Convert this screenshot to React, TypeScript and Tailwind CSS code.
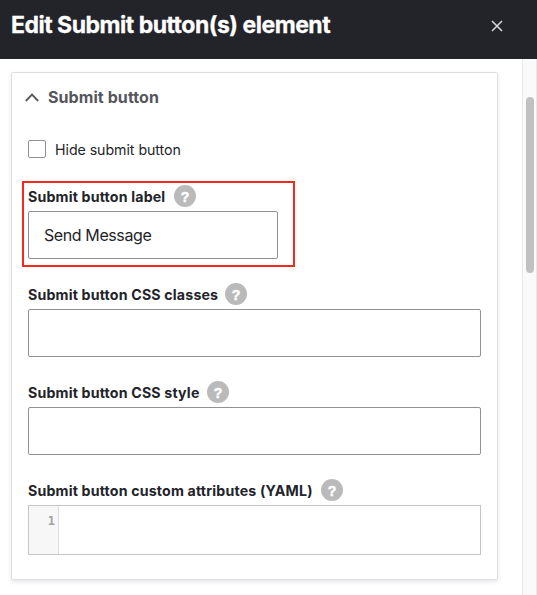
import React from "react";

function Help() {
  return (
    <span className="flex size-[22px] shrink-0 items-center justify-center rounded-full bg-[#bababa] pt-px font-['Liberation_Sans',sans-serif] text-[14px] leading-none font-bold text-white [-webkit-text-stroke:0.5px_white]">
      ?
    </span>
  );
}

function FieldLabel({ text, width }: { text: string; width: string }) {
  return (
    <div className="mb-1 flex h-[22px] items-center gap-2">
      <label className={`${width} text-[14.2px] leading-[22px] font-bold tracking-[0.17px] whitespace-nowrap`}>
        <span className="relative top-px">{text}</span>
      </label>
      <Help />
    </div>
  );
}

const inputStyle =
  "block h-12 rounded-[2px] border border-[#919297] bg-white px-[15px] text-[16px] tracking-[-0.4px] text-[#232429] outline-none";

export default function App() {
  return (
    <div className="flex h-[595px] w-[537px] flex-col overflow-hidden bg-white font-['Inter',sans-serif] text-[#232429]">
      <header className="flex h-[59px] shrink-0 items-start justify-between bg-[#232429] pr-[34px] pl-[11px] text-white">
        <h1 className="mt-[9px] text-[23px] leading-8 font-bold tracking-[-0.49px] whitespace-nowrap [-webkit-text-stroke:0.3px_white]">
          Edit Submit button(s) element
        </h1>
        <button className="mt-5" aria-label="Close">
          <svg width="12" height="12" viewBox="0 0 12 12" fill="none" stroke="#d8d9dc" strokeWidth="1.5">
            <path d="M1 1l10 10M11 1L1 11" />
          </svg>
        </button>
      </header>

      <div className="flex min-h-0 flex-1">
        <main className="min-w-0 flex-1 pt-[13px] pr-6 pl-[11px]">
          <section className="h-[508px] rounded-[2px] border border-[#dedfe4] px-4 shadow-[0_2px_4px_rgba(0,0,0,0.1)]">
            <div className="-ml-[3px] flex h-12 items-center text-[#55565b]">
              <svg width="14" height="9" viewBox="0 0 14 9" fill="none" stroke="currentColor" strokeWidth="1.8">
                <path d="M0.8 8L7 1.6L13.2 8" />
              </svg>
              <h2 className="ml-[9px] text-[16px] font-bold tracking-[0.08px]">Submit button</h2>
            </div>

            <div className="mt-[19px] flex h-[18px] items-center gap-[9px]">
              <span className="size-[18px] rounded-[2px] border border-[#919297]" />
              <span className="relative top-px text-[14.2px] tracking-[-0.05px]">Hide submit button</span>
            </div>

            <div className="relative mt-[27px]">
              <FieldLabel text="Submit button label" width="w-[138px]" />
              <input className={`${inputStyle} w-[250px]`} defaultValue="Send Message" />
              <div className="pointer-events-none absolute -top-1 -left-1.5 h-[86px] w-[273px] border-2 border-[#f5281e]" />
            </div>

            <div className="mt-6">
              <FieldLabel text="Submit button CSS classes" width="w-[189px]" />
              <input className={`${inputStyle} w-full`} />
            </div>

            <div className="mt-6">
              <FieldLabel text="Submit button CSS style" width="w-[171px]" />
              <input className={`${inputStyle} w-full`} />
            </div>

            <div className="mt-6">
              <FieldLabel text="Submit button custom attributes (YAML)" width="w-[285px]" />
              <div className="flex h-[50px] border border-[#c5c5c5]">
                <div className="w-[30px] border-r border-[#ddd] bg-[#f7f7f7] pt-[7px] pr-[3px] text-right font-['DejaVu_Sans_Mono',monospace] text-[12px] leading-4 font-bold text-[#a3a3a3]">
                  1
                </div>
              </div>
            </div>
          </section>
        </main>

        <div className="w-[15px] shrink-0 border-x border-[#e8e8e8] bg-[#fafafa] pt-[38px] pl-[3px]">
          <div className="h-44 w-2 rounded-full bg-[#c1c1c1]" />
        </div>
      </div>
    </div>
  );
}
